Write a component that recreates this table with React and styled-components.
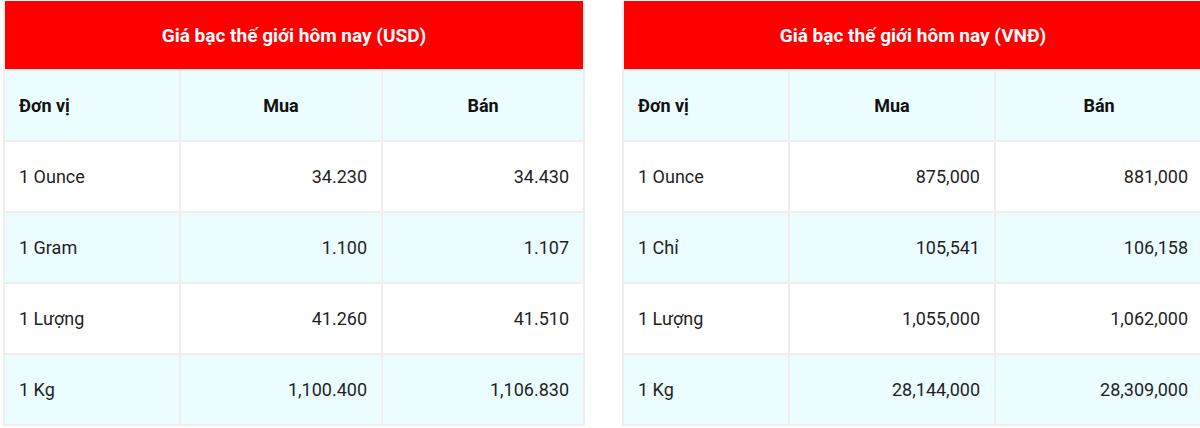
import React from 'react';
import styled, { createGlobalStyle } from 'styled-components';

const GlobalStyle = createGlobalStyle`
  html, body {
    margin: 0;
    padding: 0;
    background: #ffffff;
    overflow: hidden;
  }
  body {
    font-family: Roboto, "Noto Sans", "Liberation Sans", sans-serif;
  }
`;

const Page = styled.div`
  display: flex;
  gap: 37px;
  padding: 1px 0 0 3px;
  width: 1250px;
`;

const Table = styled.table`
  border-collapse: collapse;
  table-layout: fixed;
  width: ${p => p.$width}px;
  flex: none;
  color: #1f1f1f;
  font-size: 18px;
`;

const Caption = styled.th`
  background: #ff0000;
  color: #ffffff;
  font-size: 19px;
  font-weight: 700;
  text-align: center;
  height: 68px;
  padding: 0;
  border: 2px solid #eeeeee;
  border-top: 0;
`;

const Row = styled.tr`
  background: ${p => (p.$tinted ? '#ebfdff' : '#ffffff')};
`;

const HeadCell = styled.th`
  height: 69px;
  padding: 0 14px;
  border: 2px solid #eeeeee;
  font-size: 18px;
  font-weight: 700;
  color: #111111;
  text-align: ${p => p.$align || 'center'};
`;

const Cell = styled.td`
  height: 69px;
  padding: 0 14px;
  border: 2px solid #eeeeee;
  text-align: ${p => p.$align || 'right'};
  white-space: nowrap;
`;

const tables = [
  {
    title: 'Giá bạc thế giới hôm nay (USD)',
    cols: [176, 202, 202],
    rows: [
      ['1 Ounce', '34.230', '34.430'],
      ['1 Gram', '1.100', '1.107'],
      ['1 Lượng', '41.260', '41.510'],
      ['1 Kg', '1,100.400', '1,106.830'],
    ],
  },
  {
    title: 'Giá bạc thế giới hôm nay (VNĐ)',
    cols: [166, 206, 208],
    rows: [
      ['1 Ounce', '875,000', '881,000'],
      ['1 Chỉ', '105,541', '106,158'],
      ['1 Lượng', '1,055,000', '1,062,000'],
      ['1 Kg', '28,144,000', '28,309,000'],
    ],
  },
];

function PriceTable({ data }) {
  const width = data.cols.reduce((a, b) => a + b, 0);
  return (
    <Table $width={width}>
      <colgroup>
        {data.cols.map((w, i) => (
          <col key={i} style={{ width: w }} />
        ))}
      </colgroup>
      <thead>
        <tr>
          <Caption colSpan={3}>{data.title}</Caption>
        </tr>
        <Row $tinted>
          <HeadCell $align="left">Đơn vị</HeadCell>
          <HeadCell>Mua</HeadCell>
          <HeadCell>Bán</HeadCell>
        </Row>
      </thead>
      <tbody>
        {data.rows.map((r, i) => (
          <Row key={i} $tinted={i % 2 === 1}>
            <Cell $align="left">{r[0]}</Cell>
            <Cell>{r[1]}</Cell>
            <Cell>{r[2]}</Cell>
          </Row>
        ))}
      </tbody>
    </Table>
  );
}

export default function App() {
  return (
    <>
      <GlobalStyle />
      <Page>
        {tables.map((t, i) => (
          <PriceTable key={i} data={t} />
        ))}
      </Page>
    </>
  );
}
